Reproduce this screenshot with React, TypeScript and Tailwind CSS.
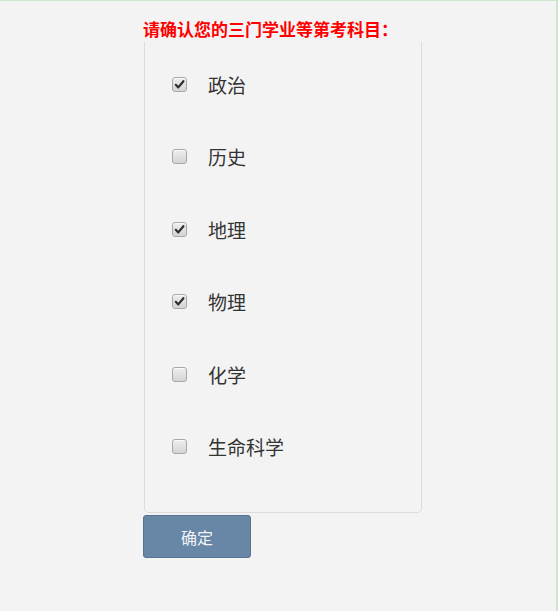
const SUBJECTS = [
  { name: "政治", checked: true },
  { name: "历史", checked: false },
  { name: "地理", checked: true },
  { name: "物理", checked: true },
  { name: "化学", checked: false },
  { name: "生命科学", checked: false },
];

function Box({ checked }: { checked: boolean }) {
  return (
    <span className="flex h-[15px] w-[15px] items-center justify-center rounded-[3px] border border-[#a8a8a8] bg-gradient-to-b from-[#eeeeee] to-[#d4d4d4] shadow-[inset_0_1px_0_#fafafa]">
      {checked && (
        <svg width="11" height="11" viewBox="0 0 11 11">
          <path d="M1.8 5.8 L4.3 8.4 L9.4 2.2" fill="none" stroke="#2e2e2e" strokeWidth="2.2" strokeLinecap="round" strokeLinejoin="round" />
        </svg>
      )}
    </span>
  );
}

export default function App() {
  return (
    <div
      className="h-[611px] w-[558px] border-t border-r-2 border-[#cbe7cd] bg-[#f3f3f3] pl-[143px] pt-[17px]"
      style={{ fontFamily: '"Noto Sans CJK SC", "Noto Sans", sans-serif' }}
    >
      <div className="text-[17px] font-bold leading-[22px] text-[#ff0000]">请确认您的三门学业等第考科目：</div>
      <div className="mt-[2px] ml-px w-[278px] rounded-b-[5px] border border-t-0 border-[#dcdcdc] pl-[27px] pt-[6px] pb-[29px]">
        {SUBJECTS.map((s) => (
          <label key={s.name} className="flex h-[72.5px] items-center gap-[21px]">
            <Box checked={s.checked} />
            <span className="text-[19px] leading-none text-[#333333]">{s.name}</span>
          </label>
        ))}
      </div>
      <button className="mt-[2px] flex h-[43px] w-[108px] items-center justify-center rounded-[3px] border border-[#557290] bg-[#6886a5] text-[16px] text-[#f2f5f8]">
        确定
      </button>
    </div>
  );
}
